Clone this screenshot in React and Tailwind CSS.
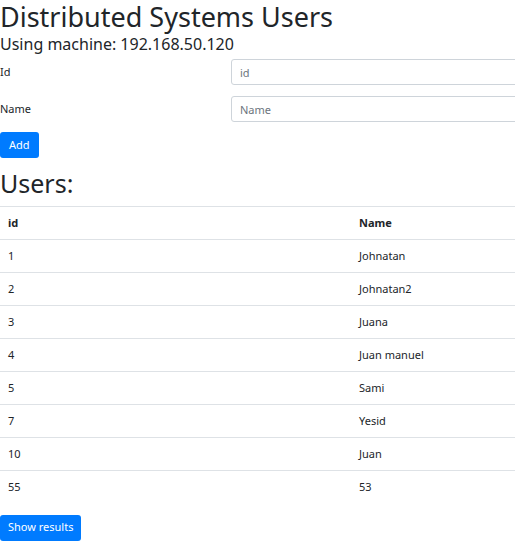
import React, { useState } from 'react';

const users = [
  { id: 1, name: 'Johnatan' },
  { id: 2, name: 'Johnatan2' },
  { id: 3, name: 'Juana' },
  { id: 4, name: 'Juan manuel' },
  { id: 5, name: 'Sami' },
  { id: 7, name: 'Yesid' },
  { id: 10, name: 'Juan' },
  { id: 55, name: '53' },
];

const App = () => {
  const [id, setId] = useState('');
  const [name, setName] = useState('');

  return (
    <div
      className="w-[515px] h-[552px] overflow-hidden bg-white text-[#212529]"
      style={{ fontFamily: '"Noto Sans", "Open Sans", sans-serif' }}
    >
      <div className="w-[600px]">
        <h1 className="w-fit text-[27px] leading-[33px] font-normal">Distributed Systems Users</h1>
        <h4 className="w-fit text-[16px] leading-[22px]">Using machine: 192.168.50.120</h4>

        <div className="flex items-center mt-[4px] h-[26px]">
          <label className="w-[231px] text-[11px]" htmlFor="id">Id</label>
          <input
            id="id"
            className="flex-1 h-[26px] border border-[#ced4da] rounded-[3px] px-[8px] text-[11px] placeholder-[#6c757d] focus:outline-none"
            placeholder="id"
            value={id}
            onChange={(e) => setId(e.target.value)}
          />
        </div>
        <div className="flex items-center mt-[11px] h-[26px]">
          <label className="w-[231px] text-[11px]" htmlFor="name">Name</label>
          <input
            id="name"
            className="flex-1 h-[26px] border border-[#ced4da] rounded-[3px] px-[8px] text-[11px] placeholder-[#6c757d] focus:outline-none"
            placeholder="Name"
            value={name}
            onChange={(e) => setName(e.target.value)}
          />
        </div>
        <button className="mt-[10px] h-[26px] px-[9px] bg-[#007bff] text-white text-[11px] rounded-[3px]">
          Add
        </button>

        <h2 className="w-fit text-[25px] leading-[30px] mt-[10px]">Users:</h2>
        <table className="w-full mt-[8px] text-[11px] border-collapse">
          <thead>
            <tr className="border-t border-b border-[#dee2e6] h-[33px]">
              <th className="w-[359px] text-left font-bold pl-[8px]">id</th>
              <th className="text-left font-bold">Name</th>
            </tr>
          </thead>
          <tbody>
            {users.map((u, i) => (
              <tr
                key={u.id}
                className={`h-[33px] ${i < users.length - 1 ? 'border-b border-[#dee2e6]' : ''}`}
              >
                <td className="pl-[8px]">{u.id}</td>
                <td>{u.name}</td>
              </tr>
            ))}
          </tbody>
        </table>
        <button className="mt-[11px] h-[26px] px-[8px] bg-[#007bff] text-white text-[11px] rounded-[3px]">
          Show results
        </button>
      </div>
    </div>
  );
};

export default App;
